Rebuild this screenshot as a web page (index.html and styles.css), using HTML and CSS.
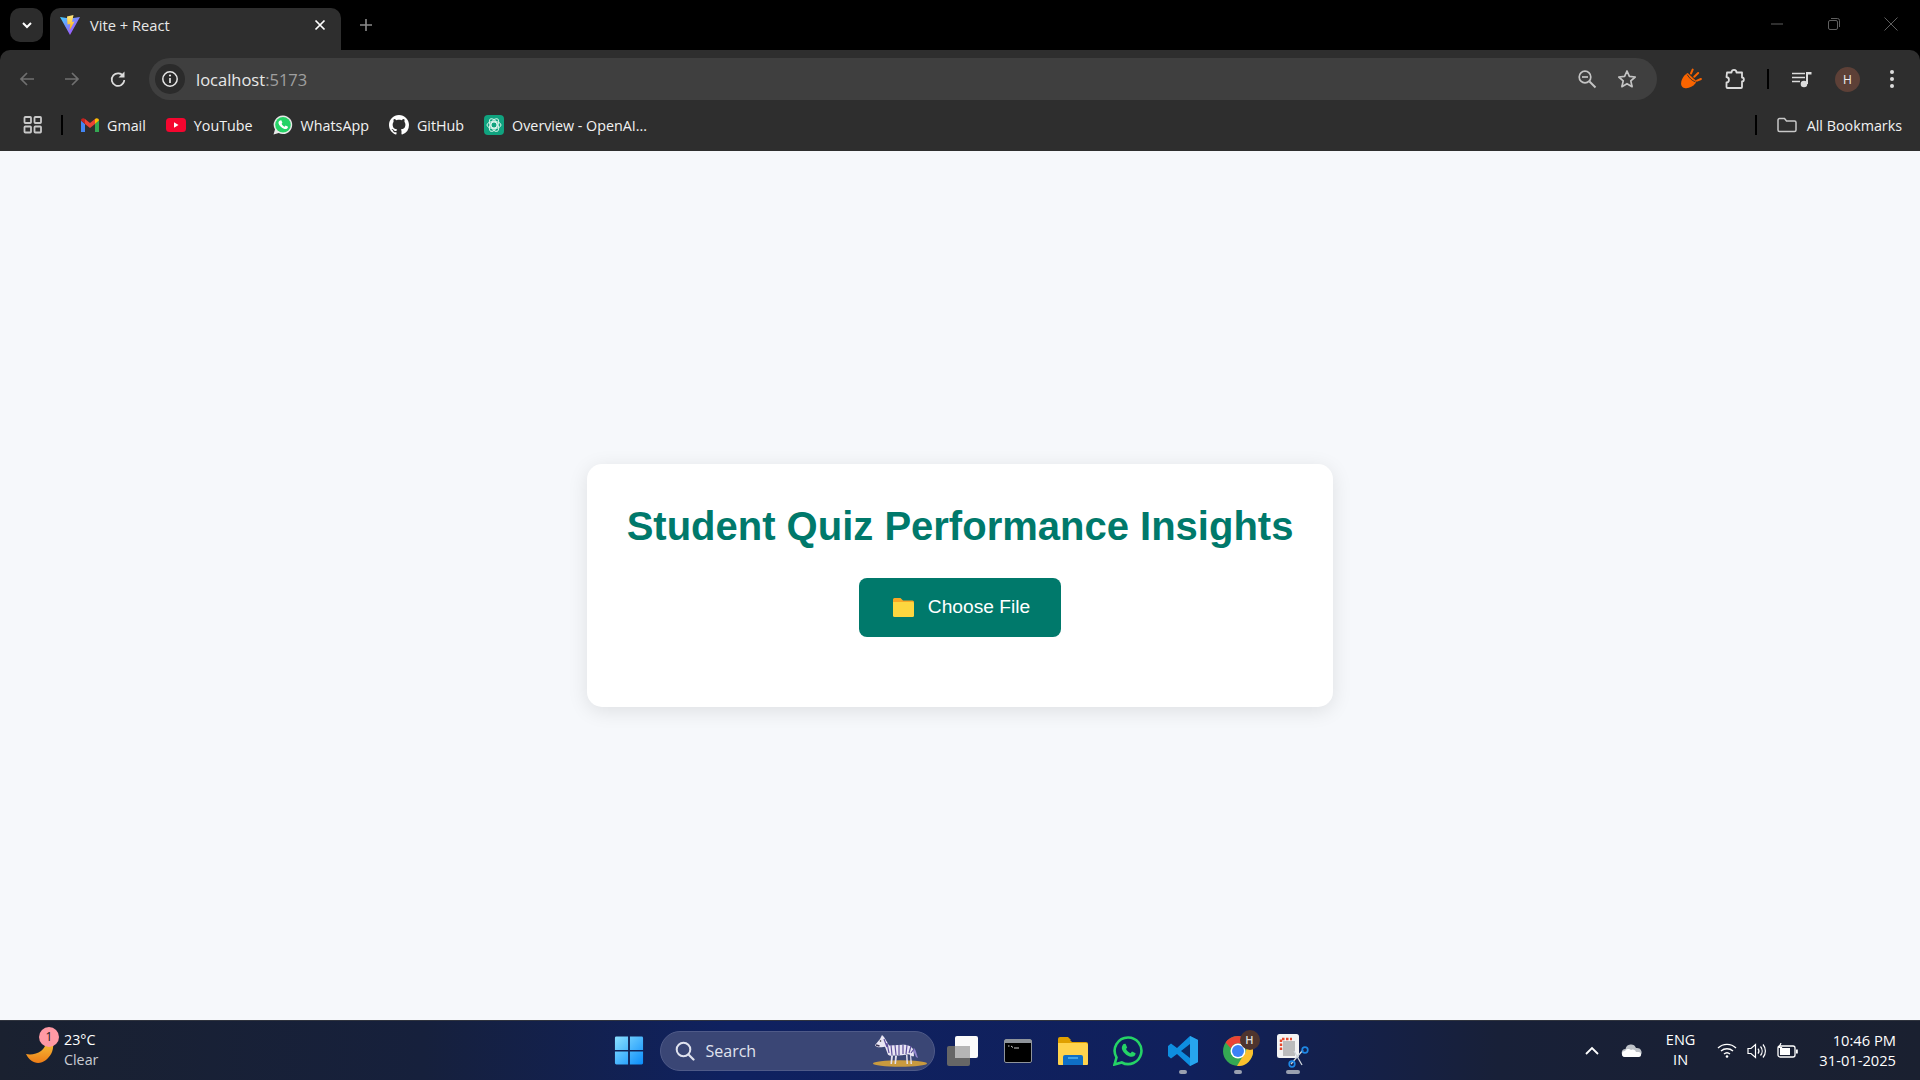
FILE: index.html
```html
<!DOCTYPE html>
<html lang="en">
<head>
<meta charset="utf-8">
<title>Vite + React</title>
<link rel="stylesheet" href="styles.css">
</head>
<body>
<div class="window">
  <header class="tabstrip">
    <div class="tabsearch">
      <svg width="14" height="14" viewBox="0 0 14 14"><path d="M3 5l4 4 4-4" fill="none" stroke="#fff" stroke-width="2"/></svg>
    </div>
    <div class="tab">
      <svg class="favicon" width="22" height="22" viewBox="0 0 22 22">
        <defs>
          <linearGradient id="vg" x1="0" y1="0" x2="1" y2="1"><stop offset="0" stop-color="#41d1ff"/><stop offset="1" stop-color="#bd34fe"/></linearGradient>
          <linearGradient id="vy" x1="0" y1="0" x2="0" y2="1"><stop offset="0" stop-color="#ffea83"/><stop offset="1" stop-color="#ffa800"/></linearGradient>
        </defs>
        <path d="M1 3l10 1.6L21 3 11 21z" fill="url(#vg)"/>
        <path d="M8 2.500L14.500 1 13 8l2.500-.5-5 9 .8-6.500-2.800.5z" fill="url(#vy)"/>
      </svg>
      <span class="tabtitle">Vite + React</span>
      <svg class="tabclose" width="12" height="12" viewBox="0 0 12 12"><path d="M1.500 1.500l9 9M10.500 1.500l-9 9" stroke="#fff" stroke-width="1.700"/></svg>
    </div>
    <svg class="newtab" width="14" height="14" viewBox="0 0 14 14"><path d="M7 1v12M1 7h12" stroke="#8a8a8a" stroke-width="1.600"/></svg>
    <div class="winctrls">
      <span class="winbtn"><svg width="14" height="14" viewBox="0 0 14 14"><path d="M1 7h12" stroke="#5f5f5f"/></svg></span>
      <span class="winbtn"><svg width="14" height="14" viewBox="0 0 14 14"><rect x="1.500" y="3.500" width="9" height="9" rx="1.500" fill="none" stroke="#5f5f5f"/><path d="M4 1.500h6.500a2 2 0 0 1 2 2V10" fill="none" stroke="#5f5f5f"/></svg></span>
      <span class="winbtn"><svg width="14" height="14" viewBox="0 0 14 14"><path d="M.5.500l13 13M13.500.500l-13 13" stroke="#5f5f5f"/></svg></span>
    </div>
  </header>

  <div class="toolbar">
    <span class="tbtn back"><svg width="18" height="18" viewBox="0 0 18 18"><path d="M16 9H3M9 3L3 9l6 6" fill="none" stroke="#707070" stroke-width="1.700"/></svg></span>
    <span class="tbtn fwd"><svg width="18" height="18" viewBox="0 0 18 18"><path d="M2 9h13M9 3l6 6-6 6" fill="none" stroke="#707070" stroke-width="1.700"/></svg></span>
    <span class="tbtn reload"><svg width="18" height="18" viewBox="0 0 18 18"><path d="M14.500 6.500A6.300 6.300 0 1 0 15.300 10" fill="none" stroke="#dcdcdc" stroke-width="1.700"/><path d="M15.500 1.500v6h-6z" fill="#dcdcdc"/></svg></span>
    <div class="omnibox">
      <span class="siteinfo"><svg width="18" height="18" viewBox="0 0 18 18"><circle cx="9" cy="9" r="7.200" fill="none" stroke="#e6e6e6" stroke-width="1.500"/><path d="M9 8v5" stroke="#e6e6e6" stroke-width="1.700"/><circle cx="9" cy="5.500" r="1.100" fill="#e6e6e6"/></svg></span>
      <span class="url">localhost<span class="port">:5173</span></span>
      <span class="omni-icon zoomicon"><svg width="20" height="20" viewBox="0 0 20 20"><circle cx="8" cy="8" r="5.800" fill="none" stroke="#c4c4c4" stroke-width="1.700"/><path d="M5 8h6" stroke="#c4c4c4" stroke-width="1.700"/><path d="M12.500 12.500l6 6" stroke="#c4c4c4" stroke-width="1.900"/></svg></span>
      <span class="omni-icon star"><svg width="20" height="20" viewBox="0 0 20 20"><path d="M10 2l2.400 5.400 5.800.6-4.400 3.900 1.300 5.800L10 14.700l-5.100 3 1.300-5.800L1.800 8l5.800-.6z" fill="none" stroke="#c4c4c4" stroke-width="1.700" stroke-linejoin="round"/></svg></span>
    </div>
    <span class="tbtn ext1"><svg width="22" height="22" viewBox="0 0 20 20"><path d="M7 4.500C4 6 1 10 1 14c0 4 4 5 7 4 3-1 6-3 7-6z" fill="#f96400"/><path d="M6.500 6c2 3 4 5.500 7.500 6.500" fill="none" stroke="#2e2e2e" stroke-width=".8"/><path d="M10 5l1.500-3.500M13 8l3.500-3.500M15.500 11.500l3.500-1.500" stroke="#f96400" stroke-width="1.800" stroke-linecap="round"/></svg></span>
    <span class="tbtn ext2"><svg width="22" height="22" viewBox="0 0 22 22"><path d="M3 4.500h4.500c0-3.500 5-3.500 5 0H18v5c2.500 0 2.500 4 0 4V19a1 1 0 0 1-1 1H3.500a1 1 0 0 1-1-1v-4.500c3 0 3.500-5 0-5.500L3 4.500z" fill="none" stroke="#dcdcdc" stroke-width="1.800" stroke-linejoin="round"/></svg></span>
    <span class="vsep"></span>
    <span class="tbtn media"><svg width="22" height="22" viewBox="0 0 22 22"><path d="M1 5.500h13M1 9.500h13M1 13.500h8" stroke="#dcdcdc" stroke-width="1.700"/><path d="M16 4v12" stroke="#dcdcdc" stroke-width="2"/><path d="M16 4h4.500v2.500H16z" fill="#dcdcdc"/><circle cx="13" cy="16" r="3.300" fill="#dcdcdc"/></svg></span>
    <span class="avatar">H</span>
    <span class="tbtn dots"><svg width="6" height="20" viewBox="0 0 6 20"><circle cx="3" cy="3" r="2" fill="#dcdcdc"/><circle cx="3" cy="10" r="2" fill="#dcdcdc"/><circle cx="3" cy="17" r="2" fill="#dcdcdc"/></svg></span>
  </div>

  <nav class="bookmarks">
    <span class="apps"><svg width="20" height="18" viewBox="0 0 20 18"><g fill="none" stroke="#c8c8c8" stroke-width="1.800"><rect x="1.500" y="1" width="6.500" height="6" rx=".8"/><rect x="11.500" y="1" width="6.500" height="6" rx=".8"/><rect x="1.500" y="10.500" width="6.500" height="6" rx=".8"/><rect x="11.500" y="10.500" width="6.500" height="6" rx=".8"/></g></svg></span>
    <span class="bsep"></span>
    <a class="bm"><svg width="18" height="14" viewBox="0 0 18 14"><path d="M0 2.500V14h4V6z" fill="#4285f4"/><path d="M14 6v8h4V2.500z" fill="#34a853"/><path d="M14 1l-5 4-5-4v5l5 4 5-4z" fill="#ea4335"/><path d="M0 2.500C0 .5 2.500-.5 4 1v5z" fill="#c5221f"/><path d="M14 1c1.500-1.500 4-.5 4 1.500L14 6z" fill="#fbbc04"/></svg>Gmail</a>
    <a class="bm"><svg width="20" height="14" viewBox="0 0 20 14"><rect width="20" height="14" rx="3.500" fill="#f5062f"/><path d="M8 4.200v5.600L12.500 7z" fill="#fff"/></svg>YouTube</a>
    <a class="bm"><svg width="20" height="20" viewBox="0 0 20 20"><path d="M10 .500a9.300 9.300 0 0 0-8 14L.5 19.500l5.200-1.400A9.300 9.300 0 1 0 10 .500z" fill="#e8e8e8"/><circle cx="10" cy="9.800" r="7.800" fill="#25d366"/><path d="M7 5.500l1.300-.2 1.100 2.500-.8 1c.6 1.300 1.700 2.300 3 2.900l1-1.100 2.400 1.100c0 2-2 2.700-3.500 2.300C8.500 13 6 10.500 5.500 8.300 5.300 7 6 6 7 5.500z" fill="#fff"/></svg>WhatsApp</a>
    <a class="bm"><svg width="20" height="20" viewBox="0 0 16 16"><path fill="#fff" fill-rule="evenodd" d="M8 0C3.580 0 0 3.580 0 8c0 3.540 2.290 6.530 5.470 7.590.4.070.55-.17.55-.38 0-.19-.01-.82-.01-1.490-2.010.37-2.530-.49-2.690-.94-.09-.23-.48-.94-.82-1.130-.28-.15-.68-.52-.01-.53.630-.01 1.080.58 1.230.82.720 1.210 1.870.87 2.330.66.070-.52.280-.87.510-1.070-1.780-.2-3.640-.89-3.640-3.950 0-.87.310-1.590.82-2.150-.08-.2-.36-1.020.08-2.120 0 0 .67-.21 2.200.82.640-.18 1.320-.27 2-.27s1.360.09 2 .27c1.530-1.040 2.200-.82 2.200-.82.440 1.100.16 1.920.08 2.120.51.560.82 1.270.82 2.150 0 3.070-1.870 3.750-3.650 3.950.29.250.54.730.54 1.480 0 1.070-.01 1.930-.01 2.200 0 .21.150.46.550.38A8.010 8.010 0 0 0 16 8c0-4.420-3.580-8-8-8z"/></svg>GitHub</a>
    <a class="bm"><svg width="20" height="20" viewBox="0 0 20 20"><rect width="20" height="20" rx="4" fill="#10a37f"/><g fill="none" stroke="#d8f3ea" stroke-width="1"><circle cx="10" cy="10" r="3"/><ellipse cx="10" cy="10" rx="7" ry="3.600"/><ellipse cx="10" cy="10" rx="7" ry="3.600" transform="rotate(60 10 10)"/><ellipse cx="10" cy="10" rx="7" ry="3.600" transform="rotate(120 10 10)"/></g></svg>Overview - OpenAI...</a>
    <span class="bm-spacer"></span>
    <span class="bsep"></span>
    <a class="bm allbm"><svg width="20" height="16" viewBox="0 0 20 16"><path d="M1 3a1.500 1.500 0 0 1 1.500-1.500h5l2 2.500h8A1.500 1.500 0 0 1 19 5.500V13a1.500 1.500 0 0 1-1.500 1.500h-15A1.500 1.500 0 0 1 1 13z" fill="none" stroke="#c8c8c8" stroke-width="1.500"/></svg>All Bookmarks</a>
  </nav>

  <main class="page">
    <section class="card">
      <h1 class="title">Student Quiz Performance Insights</h1>
      <button class="choose" type="button">
        <svg width="21" height="19" viewBox="0 0 21 19"><path d="M0 1.500A1.500 1.500 0 0 1 1.500 0h6L10 2.500h9.500A1.500 1.500 0 0 1 21 4v4H0z" fill="#f9a825"/><path d="M0 4h19.500A1.500 1.500 0 0 1 21 5.500v12a1.500 1.500 0 0 1-1.500 1.500h-18A1.500 1.500 0 0 1 0 17.500z" fill="#fdd73f"/></svg>
        <span class="choose-label">Choose File</span>
      </button>
    </section>
  </main>

  <footer class="taskbar">
    <div class="tb-left">
      <span class="weathericon">
        <svg width="30" height="32" viewBox="0 0 30 32"><defs><linearGradient id="moon" x1="0" y1="0" x2="0" y2="1"><stop offset="0" stop-color="#f6c33a"/><stop offset="1" stop-color="#ee7d17"/></linearGradient></defs><path d="M0 19C5 20 11 19 15 16 20 12 20 8 20 6L27 6C28 14 26 20 20 25 12 31 4 27 0 19z" fill="url(#moon)"/></svg>
        <span class="badge">1</span>
      </span>
      <div class="weather"><div class="temp">23°C</div><div class="cond">Clear</div></div>
    </div>
    <div class="tb-center">
      <svg class="start" width="30" height="29" viewBox="0 0 32 30" preserveAspectRatio="none"><defs><linearGradient id="wn" x1="0" y1="0" x2="1" y2="1"><stop offset="0" stop-color="#8be0ff"/><stop offset="1" stop-color="#0a8dfb"/></linearGradient></defs><path d="M1 2a1.500 1.500 0 0 1 1.500-1.500H15V14.500H1zM17 .5h12.500A1.500 1.500 0 0 1 31 2v12.500H17zM1 16h14v13.500H2.500A1.500 1.500 0 0 1 1 28zM17 16h14v12a1.500 1.500 0 0 1-1.500 1.500H17z" fill="url(#wn)"/></svg>
      <div class="search">
        <svg width="20" height="20" viewBox="0 0 20 20"><circle cx="8.500" cy="8.500" r="6.800" fill="none" stroke="#dfe2ee" stroke-width="2"/><path d="M13.500 13.500l5 5" stroke="#dfe2ee" stroke-width="2.200" stroke-linecap="round"/></svg>
        <span class="searchtext">Search</span>
        <svg class="zebra" width="58" height="34" viewBox="0 0 58 34">
          <ellipse cx="29" cy="29.500" rx="27" ry="3.300" fill="#c99a3e"/>
          <path d="M20 22l-.5 8h1.500l1-8zM24 22l-.5 8H25l1-8zM35 21l.5 9H37l-.5-9zM39 20l.5 10H41l-1-10z" fill="#e4e0f0"/>
          <path d="M4.500 10.500L9 5l2-4 2 2 3 5 2 3.500 14-.8c5 0 9 1.500 10.500 5.500l.5 6-2 0-3-2-7 1-12 .5-2-1-3-8-3.500.5-3.500 0-3-1.500z" fill="#e9e6f4"/>
          <path d="M43 14c2 2 2.500 6 4 10l-2-1c-1-3-2.500-5-3-7z" fill="#9285cc"/>
          <path d="M13 5l3 8M16 9l2 10M20 11l1 10M24 11l1 10M28 11v10M32 11v9M36 11l-1 9M40 12l-2 7M43 15l-3 4" stroke="#5d4f9c" stroke-width="1.200" fill="none"/>
          <path d="M5 11l3.500 1" stroke="#3a3555" stroke-width="1.600"/>
          <circle cx="9.500" cy="7" r=".8" fill="#222"/>
        </svg>
      </div>
      <span class="tk"><svg width="32" height="30" viewBox="0 0 32 30"><rect x="0" y="10" width="23" height="20" rx="2" fill="#666"/><rect x="8" y="0" width="23" height="22" rx="2" fill="#fafafa"/><rect x="8" y="10" width="15" height="12" fill="#b5b5b5"/></svg></span>
      <span class="tk"><svg width="28" height="24" viewBox="0 0 28 24"><rect x=".5" y=".5" width="27" height="23" rx="1.500" fill="#000" stroke="#8f949b"/><rect x="1" y="1" width="26" height="3" fill="#8f949b"/><path d="M4 7h1.500M7 7l2 1.500M10 9h5" stroke="#c8c8c8"/></svg></span>
      <span class="tk"><svg width="30" height="28" viewBox="0 0 30 28"><path d="M0 2a2 2 0 0 1 2-2h8l3 3h-13z" fill="#e0a000"/><path d="M0 3h12l2 2h14a2 2 0 0 1 2 2v6H0z" fill="#e0a000"/><path d="M0 6h28a2 2 0 0 1 2 2v19a1 1 0 0 1-1 1H1a1 1 0 0 1-1-1z" fill="#ffd34d"/><path d="M5 20a2 2 0 0 1 2-2h16a2 2 0 0 1 2 2v8H5z" fill="#0f6fc6"/><path d="M10 21h10" stroke="#54b4f0" stroke-width="1.500"/></svg></span>
      <span class="tk"><svg width="30" height="30" viewBox="0 0 30 30"><path d="M15 1.500a13.300 13.300 0 0 0-11.500 20L1.500 28.500l7.300-2A13.300 13.300 0 1 0 15 1.500z" fill="none" stroke="#25d366" stroke-width="2.600"/><path d="M10.500 8l2-.3 1.700 3.700-1.200 1.500c1 2 2.500 3.500 4.500 4.400l1.500-1.700 3.600 1.700c0 3-3 4-5.200 3.400-4-1-7.700-4.700-8.500-8-.3-2 .7-3.500 1.600-4.700z" fill="#25d366"/></svg></span>
      <span class="tk active"><svg width="30" height="30" viewBox="0 0 30 30"><path d="M22 0l8 4v22l-8 4-13-12-6 4.500L0 20v-10l3-2.500L9 12z" fill="#0e8ee0"/><path d="M22 0l8 4v22l-8 4z" fill="#27a5ee"/><path d="M22 8l-9 7 9 7z" fill="#0b2a63"/></svg></span>
      <span class="tk active chrome">
        <svg width="30" height="30" viewBox="0 0 30 30"><circle cx="15" cy="15" r="15" fill="#34a853"/><path d="M15 0a15 15 0 0 1 13 7.500H15a7.500 7.500 0 0 0-7 5L2.600 6.500A15 15 0 0 1 15 0z" fill="#ea4335"/><path d="M28 7.500A15 15 0 0 1 14 30l6.500-11a7.500 7.500 0 0 0 .5-11.500z" fill="#fbc02d"/><circle cx="15" cy="15" r="7.500" fill="#fff"/><circle cx="15" cy="15" r="6" fill="#3b82f6"/></svg>
        <span class="tkbadge">H</span>
      </span>
      <span class="tk active wide"><svg width="32" height="34" viewBox="0 0 32 34"><rect width="22" height="24" rx="2.500" fill="#f3f3f3"/><path d="M4 16V5h11" fill="none" stroke="#e5462b" stroke-width="2.400" stroke-dasharray="2.500 1.500"/><rect x="6" y="7" width="12" height="15" fill="#bcbcbc"/><path d="M14 30L26 16M17 17l8 14" stroke="#cfd6dc" stroke-width="1.300"/><circle cx="28" cy="16" r="2.800" fill="none" stroke="#1e88e5" stroke-width="1.700"/><circle cx="15" cy="30" r="2.800" fill="none" stroke="#1e88e5" stroke-width="1.700"/></svg></span>
    </div>
    <div class="tb-right">
      <svg class="tray chev" width="16" height="10" viewBox="0 0 16 10"><path d="M2 8l6-6 6 6" fill="none" stroke="#fff" stroke-width="1.800"/></svg>
      <svg class="tray cloud" width="21" height="13" viewBox="0 0 21 13"><path d="M5 13a4 4 0 0 1-.5-8 5.500 5.500 0 0 1 10.500-1 4.500 4.500 0 0 1 2 9z" fill="#bfc3c9"/><path d="M4 13a3 3 0 0 1 0-6 4 4 0 0 1 6-1 3.500 3.500 0 0 1 5 2h2.500a2.500 2.500 0 0 1 0 5z" fill="#fff"/></svg>
      <div class="lang"><div>ENG</div><div>IN</div></div>
      <svg class="tray wifi" width="20" height="15" viewBox="0 0 20 15"><g fill="none" stroke="#fff" stroke-width="1.400"><path d="M1 5a13 13 0 0 1 18 0"/><path d="M4 8a9 9 0 0 1 12 0"/><path d="M7 11a4.500 4.500 0 0 1 6 0"/></g><circle cx="10" cy="13.500" r="1.300" fill="#fff"/></svg>
      <svg class="tray vol" width="20" height="16" viewBox="0 0 20 16"><path d="M1 5.500h3L8.500 1.500v13L4 10.500H1z" fill="none" stroke="#fff" stroke-width="1.200"/><path d="M11 5.500a4 4 0 0 1 0 5M13.500 3.500a7 7 0 0 1 0 9M16 1.500a10 10 0 0 1 0 13" fill="none" stroke="#fff" stroke-width="1.200"/></svg>
      <svg class="tray batt" width="21" height="15" viewBox="0 0 21 15"><rect x="1" y="3" width="17" height="11" rx="2" fill="none" stroke="#fff" stroke-width="1.300"/><rect x="3" y="5" width="10" height="7" fill="#fff"/><rect x="19" y="6.500" width="1.800" height="4" fill="#fff"/><path d="M4 0L2 4.500h2.500L3.500 8" fill="none" stroke="#fff" stroke-width="1.200"/></svg>
      <div class="clock"><div>10:46 PM</div><div>31-01-2025</div></div>
    </div>
  </footer>
</div>
</body>
</html>
```

FILE: styles.css
```css
* { box-sizing: border-box; }
html, body { margin: 0; height: 100%; overflow: hidden; }
body { font-family: "Open Sans", "Noto Sans", sans-serif; background: #000; }
svg { display: block; flex: none; }

.window { display: flex; flex-direction: column; height: 1080px; }

/* tab strip */
.tabstrip { height: 50px; background: #000; display: flex; padding: 8px 0 0 10px; }
.tabsearch { width: 33px; height: 34px; background: #2c2c2c; border-radius: 10px; display: flex; align-items: center; justify-content: center; }
.tab { width: 291px; height: 42px; margin-left: 7px; background: #2e2e2e; border-radius: 10px 10px 0 0; display: flex; align-items: center; padding: 0 15px 8px 9px; color: #e8e8e8; }
.favicon { margin-right: 9px; }
.tabtitle { font-size: 14.700px; flex: 1; }
.newtab { margin: 10px 0 0 18px; }
.winctrls { margin-left: auto; display: flex; margin-right: 22px; margin-top: 9px; gap: 43px; }
.winbtn { display: block; }

/* toolbar */
.toolbar { height: 51px; background: #2e2e2e; border-radius: 10px 10px 0 0; display: flex; align-items: center; padding: 7px 0 0 18px; }
.tbtn { display: flex; align-items: center; justify-content: center; }
.back { width: 18px; }
.fwd { width: 18px; margin-left: 27px; }
.reload { width: 18px; margin-left: 28px; }
.omnibox { width: 1508px; height: 42px; margin: 0 0 0 22px; background: #3f3f3f; border-radius: 21px; display: flex; align-items: center; padding: 0 0 0 6px; }
.siteinfo { width: 30px; height: 30px; background: #2b2b2b; border-radius: 50%; display: flex; align-items: center; justify-content: center; }
.url { margin-left: 11px; font-size: 16.500px; color: #e8e8e8; flex: 1; }
.port { color: #a0a0a0; }
.omni-icon { display: flex; }
.zoomicon { margin-right: 20px; }
.star { margin-right: 20px; }
.ext1 { width: 22px; margin-left: 23px; }
.ext2 { width: 22px; margin-left: 22px; }
.vsep { width: 2px; height: 20px; background: #000; margin-left: 21px; }
.media { width: 22px; margin-left: 22px; }
.avatar { width: 25px; height: 25px; border-radius: 50%; background: #5d4037; color: #f0f0f0; font-size: 12px; display: flex; align-items: center; justify-content: center; margin-left: 22px; }
.dots { width: 6px; margin-left: 29px; }

/* bookmarks */
.bookmarks { height: 50px; background: #2e2e2e; display: flex; align-items: center; padding: 0 18px 2px 23px; color: #f2f2f2; font-size: 14.300px; }
.apps { margin-right: 18px; }
.bsep { width: 2px; height: 20px; background: #000; margin-right: 18px; }
.bm { display: flex; align-items: center; gap: 8px; margin-right: 20px; white-space: nowrap; }
.bm-spacer { flex: 1; }
.allbm { margin-right: 0; gap: 10px; margin-left: 2px; }

/* page */
.page { flex: 1; background: #f6f8fb; display: flex; align-items: center; justify-content: center; }
.card { width: 746px; height: 243px; padding: 40px; background: #fff; border-radius: 15px; box-shadow: 0 4px 20px rgba(0, 0, 0, .1); display: flex; flex-direction: column; align-items: center; }
.title { margin: 0 0 30px; font: bold 40px/44px "Liberation Sans", Arial, sans-serif; color: #00796b; white-space: nowrap; }
.choose { width: 202px; height: 59px; border: 0; border-radius: 8px; background: #00796b; color: #fff; font: 19.200px "Liberation Sans", Arial, sans-serif; display: flex; align-items: center; justify-content: center; gap: 14px; padding: 0 0 0 3px; }
.choose-label { margin-top: -1px; }

/* taskbar */
.taskbar { height: 60px; display: grid; grid-template-columns: 1fr auto 1fr; align-items: center; color: #fff; background: linear-gradient(90deg, #1a2130 0%, #16203c 22%, #0f2160 38%, #10205c 62%, #182038 78%, #1a2030 100%); border-top: 1px solid #30343e; }
.tb-left { display: flex; align-items: center; padding-left: 26px; }
.weathericon { position: relative; display: block; width: 30px; height: 34px; margin-top: 2px; }
.badge { position: absolute; left: 13px; top: -8px; width: 20px; height: 20px; border-radius: 50%; background: #ff99a4; color: #1a1a1a; font-size: 12px; line-height: 20px; text-align: center; }
.weather { margin: -2px 0 0 8px; font-size: 14.300px; line-height: 20px; }
.cond { color: #c9ccd2; }
.tb-center { display: flex; align-items: center; padding-left: 14px; }
.start { margin-right: 16px; }
.search { width: 275px; height: 40px; border-radius: 20px; background: #3a4675; border: 1px solid #4f5a88; display: flex; align-items: center; padding: 0 0 0 14px; color: #e0e3ee; }
.searchtext { margin-left: 11px; font-size: 16px; flex: 1; }
.zebra { margin: 0 5px 0 0; }
.tk { position: relative; width: 55px; height: 59px; display: flex; align-items: center; justify-content: center; }
.search + .tk { margin-left: 1px; }
.active::after { content: ""; position: absolute; left: 50%; bottom: 6px; width: 8px; height: 4px; margin-left: -4px; border-radius: 2px; background: #9aa0b0; }
.wide::after { width: 14px; margin-left: -7px; }
.tkbadge { position: absolute; left: 29px; top: 9px; width: 20px; height: 20px; border-radius: 50%; background: #4e342e; color: #ddd; font-size: 11px; line-height: 20px; text-align: center; font-weight: 600; }
.tb-right { display: flex; align-items: center; justify-content: flex-end; padding-right: 24px; }
.chev { margin-right: 21px; }
.cloud { margin-right: 24px; }
.lang { font-size: 14.500px; line-height: 20px; text-align: center; margin: -2px 22px 0 0; }
.wifi { margin-right: 10px; }
.vol { margin-right: 10px; }
.batt { margin-right: 21px; }
.clock { font-size: 14.700px; line-height: 20px; text-align: right; margin-top: -2px; }
```
